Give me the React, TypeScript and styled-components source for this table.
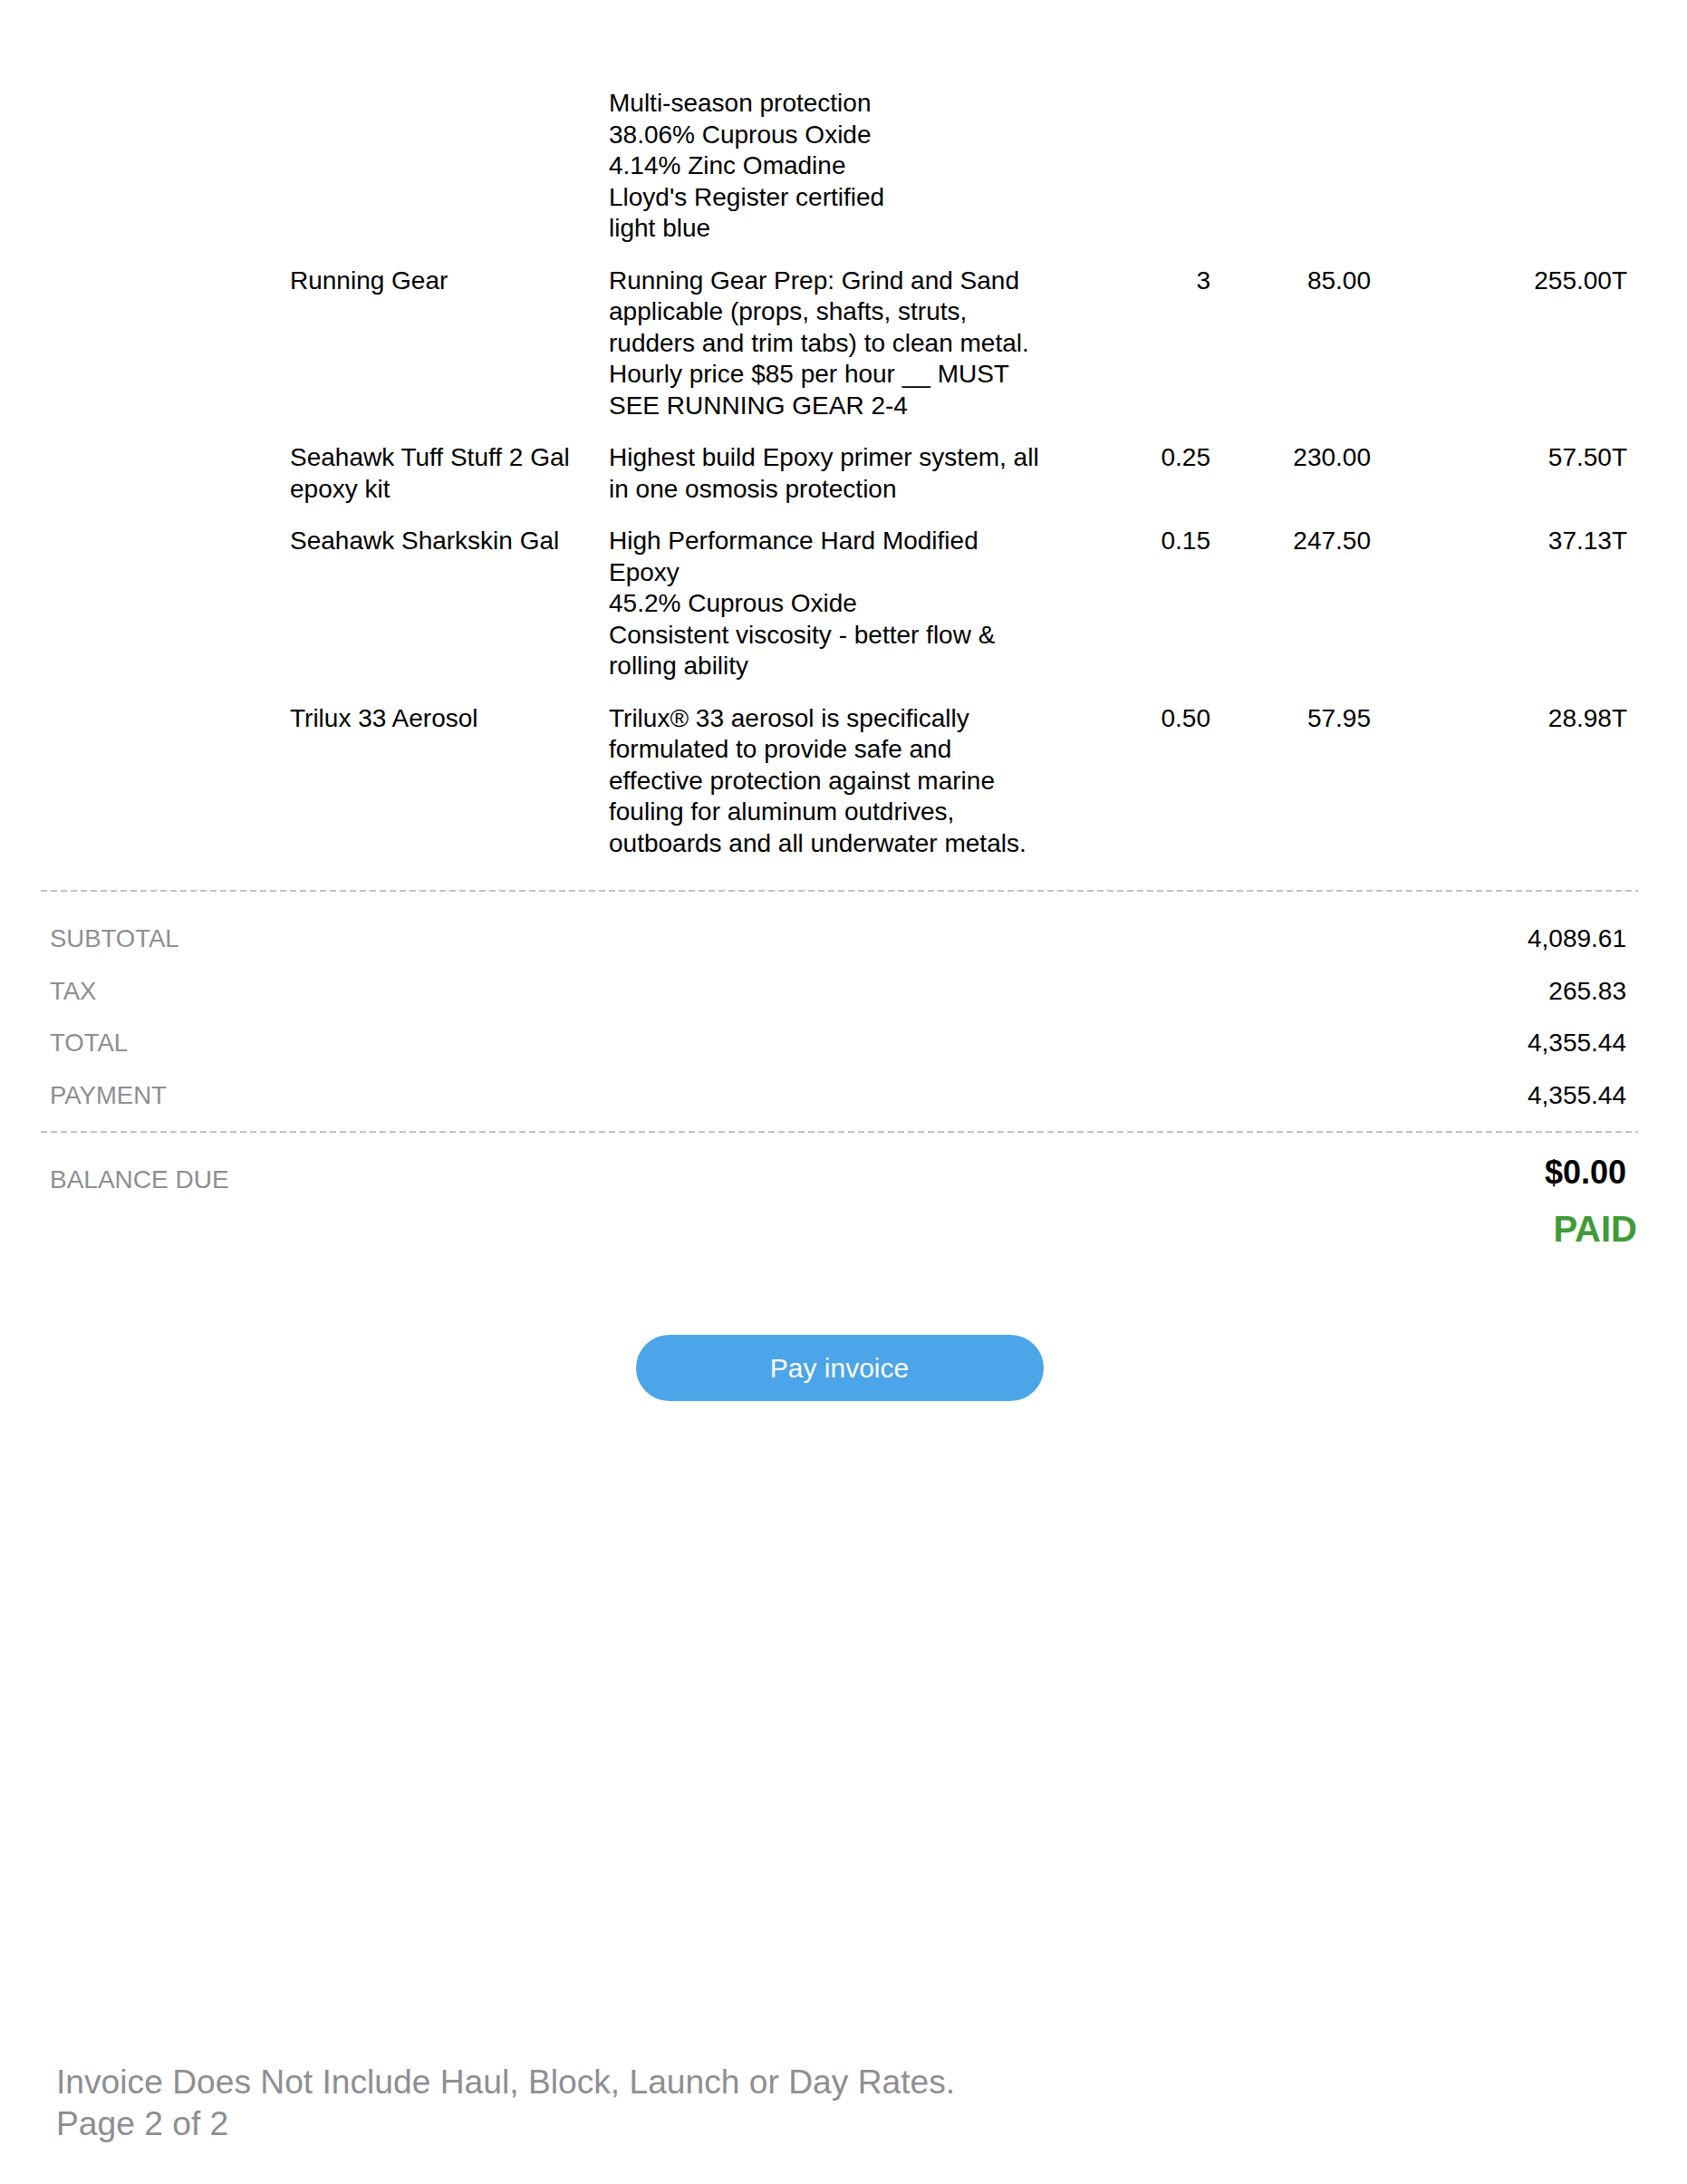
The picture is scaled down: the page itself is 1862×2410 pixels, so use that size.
import React from "react"
import styled, { createGlobalStyle } from "styled-components"

interface LineItem {
  name: string
  description: string
  qty: string
  rate: string
  amount: string
}

const items: LineItem[] = [
  {
    name: "",
    description:
      "Multi-season protection\n38.06% Cuprous Oxide\n4.14% Zinc Omadine\nLloyd's Register certified\nlight blue",
    qty: "",
    rate: "",
    amount: "",
  },
  {
    name: "Running Gear",
    description:
      "Running Gear Prep: Grind and Sand applicable (props, shafts, struts, rudders and trim tabs) to clean metal. Hourly price $85 per hour __ MUST SEE RUNNING GEAR 2-4",
    qty: "3",
    rate: "85.00",
    amount: "255.00T",
  },
  {
    name: "Seahawk Tuff Stuff 2 Gal epoxy kit",
    description: "Highest build Epoxy primer system, all in one osmosis protection",
    qty: "0.25",
    rate: "230.00",
    amount: "57.50T",
  },
  {
    name: "Seahawk Sharkskin Gal",
    description:
      "High Performance Hard Modified Epoxy\n45.2% Cuprous Oxide\nConsistent viscosity - better flow & rolling ability",
    qty: "0.15",
    rate: "247.50",
    amount: "37.13T",
  },
  {
    name: "Trilux 33 Aerosol",
    description:
      "Trilux® 33 aerosol is specifically formulated to provide safe and effective protection against marine fouling for aluminum outdrives, outboards and all underwater metals.",
    qty: "0.50",
    rate: "57.95",
    amount: "28.98T",
  },
]

const totals = [
  { label: "SUBTOTAL", value: "4,089.61" },
  { label: "TAX", value: "265.83" },
  { label: "TOTAL", value: "4,355.44" },
  { label: "PAYMENT", value: "4,355.44" },
]

const App = () => {
  return (
    <>
      <GlobalStyle />
      <Page>
        <ItemList>
          {items.map((item, index) => (
            <ItemRow key={index}>
              <span />
              <ItemName>{item.name}</ItemName>
              <ItemDescription>{item.description}</ItemDescription>
              <NumberCell>{item.qty}</NumberCell>
              <NumberCell>{item.rate}</NumberCell>
              <NumberCell>{item.amount}</NumberCell>
            </ItemRow>
          ))}
        </ItemList>

        <Divider $top={34} />

        <Totals>
          {totals.map((t) => (
            <TotalRow key={t.label}>
              <TotalLabel>{t.label}</TotalLabel>
              <TotalValue>{t.value}</TotalValue>
            </TotalRow>
          ))}
        </Totals>

        <Divider $top={0} />

        <BalanceRow>
          <BalanceLabel>BALANCE DUE</BalanceLabel>
          <BalanceColumn>
            <BalanceAmount>$0.00</BalanceAmount>
            <PaidStamp>PAID</PaidStamp>
          </BalanceColumn>
        </BalanceRow>

        <ButtonRow>
          <PayButton type="button">Pay invoice</PayButton>
        </ButtonRow>

        <Footer>
          <FooterLine>Invoice Does Not Include Haul, Block, Launch or Day Rates.</FooterLine>
          <FooterLine>Page 2 of 2</FooterLine>
        </Footer>
      </Page>
    </>
  )
}

export default App

const GlobalStyle = createGlobalStyle`
  html, body {
    margin: 0;
    padding: 0;
    background: #ffffff;
  }
  body {
    font-family: "Liberation Sans", Arial, Helvetica, sans-serif;
    color: #000000;
  }
`

const Page = styled.div`
  box-sizing: border-box;
  width: 1862px;
  min-height: 2410px;
  padding: 97px 54px 44px 45px;
  display: flex;
  flex-direction: column;
`

const ItemList = styled.div`
  display: flex;
  flex-direction: column;
  gap: 23px;
`

const ItemRow = styled.div`
  display: grid;
  grid-template-columns: 275px 352px 480px 184px 177px 283px;
  font-size: 28px;
  line-height: 34.5px;
`

const ItemName = styled.div`
  padding-right: 12px;
`

const ItemDescription = styled.div`
  white-space: pre-line;
`

const NumberCell = styled.div`
  text-align: right;
`

const Divider = styled.div<{ $top: number }>`
  height: 2px;
  margin-top: ${(p) => p.$top}px;
  background-image: repeating-linear-gradient(
    to right,
    #c2c2c2 0 7px,
    transparent 7px 11px
  );
`

const Totals = styled.div`
  display: flex;
  flex-direction: column;
  gap: 23px;
  padding: 35px 13px 22px 10px;
`

const TotalRow = styled.div`
  display: flex;
  justify-content: space-between;
  align-items: center;
  line-height: 34.5px;
`

const TotalLabel = styled.span`
  font-size: 27.5px;
  color: #8e8e93;
`

const TotalValue = styled.span`
  font-size: 28px;
  color: #000000;
`

const BalanceRow = styled.div`
  display: flex;
  justify-content: space-between;
  align-items: flex-start;
  padding: 22px 13px 0 10px;
`

const BalanceLabel = styled.span`
  font-size: 28px;
  line-height: 34.5px;
  margin-top: 13px;
  color: #8e8e93;
`

const BalanceColumn = styled.div`
  display: flex;
  flex-direction: column;
  align-items: flex-end;
  gap: 17px;
`

const BalanceAmount = styled.span`
  font-size: 36px;
  line-height: 43px;
  font-weight: 700;
  color: #000000;
`

const PaidStamp = styled.span`
  font-size: 40px;
  line-height: 48px;
  font-weight: 700;
  color: #3f9b37;
  margin-right: -12px;
`

const ButtonRow = styled.div`
  display: flex;
  justify-content: center;
  margin-top: 93px;
`

const PayButton = styled.button`
  width: 450px;
  height: 73px;
  border: none;
  border-radius: 37px;
  background: #4ba5e8;
  color: #ffffff;
  font-family: "Liberation Sans", Arial, sans-serif;
  font-size: 30px;
  cursor: pointer;
`

const Footer = styled.div`
  margin-top: auto;
  padding-left: 17px;
  display: flex;
  flex-direction: column;
`

const FooterLine = styled.span`
  font-size: 37.2px;
  line-height: 46px;
  color: #8e8e93;
`
